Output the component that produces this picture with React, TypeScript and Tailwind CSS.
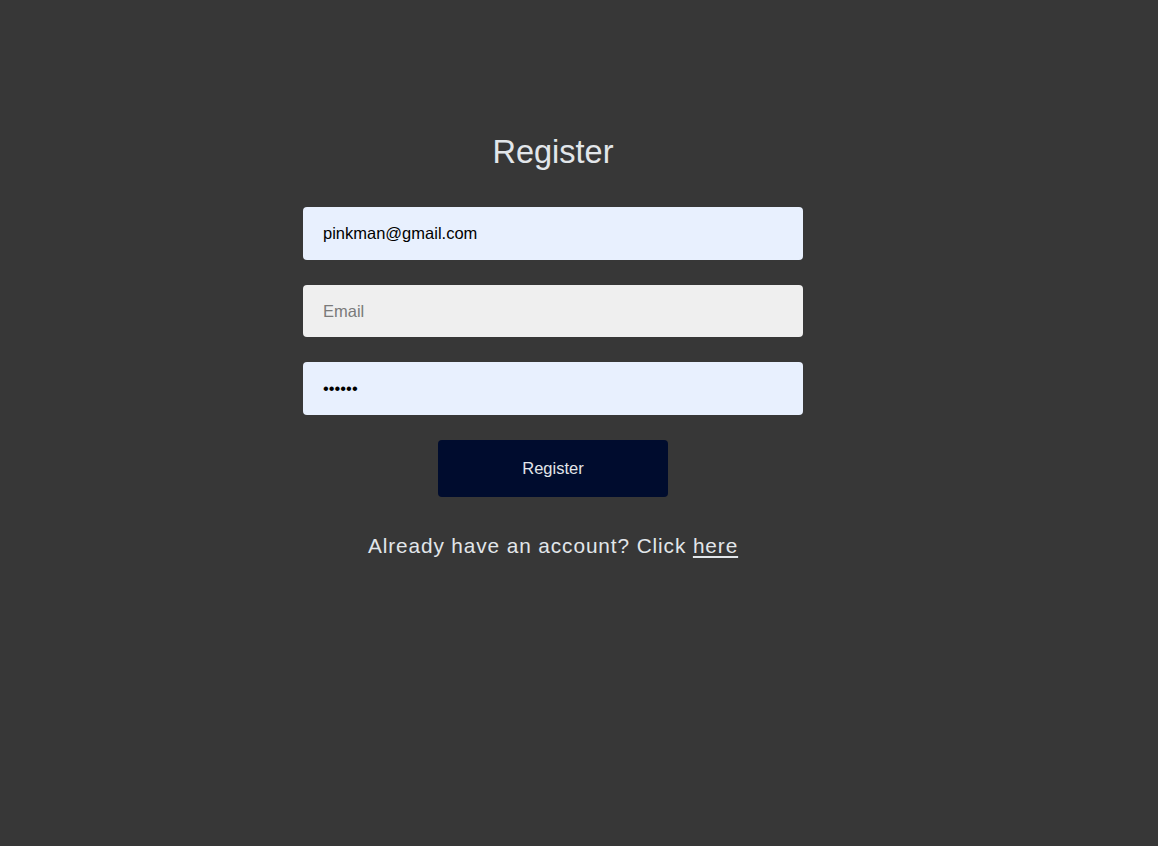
export default function App() {
  return (
    <div className="min-h-screen w-full bg-[#373737] font-['Liberation_Sans',Arial,sans-serif]">
      <div className="flex flex-col items-center pt-[133px] pr-[52px]">
        <h1 className="text-[32.5px] leading-[38px] text-[#e2e6ea] font-normal">Register</h1>

        <form className="mt-[36px] flex w-[500px] flex-col gap-[25px]" onSubmit={(e) => e.preventDefault()}>
          <input
            type="text"
            defaultValue="pinkman@gmail.com"
            className="h-[53px] w-full rounded-[4px] bg-[#e8f0fe] px-[20px] text-[16.5px] text-black outline-none"
          />
          <input
            type="email"
            placeholder="Email"
            className="h-[52px] w-full rounded-[4px] bg-[#efefef] px-[20px] text-[16.5px] text-black outline-none placeholder:text-[#7a7a7a]"
          />
          <input
            type="password"
            defaultValue="secret"
            className="h-[53px] w-full rounded-[4px] bg-[#e8f0fe] px-[20px] text-[16.5px] text-black outline-none"
          />
          <div className="flex justify-center">
            <button
              type="submit"
              className="h-[57px] w-[230px] rounded-[4px] bg-[#000c2e] text-[16.5px] text-[#e2e6ea]"
            >
              Register
            </button>
          </div>
        </form>

        <p className="mt-[33px] text-[20.8px] tracking-[0.9px] text-[#e2e6ea]">
          Already have an account? Click{' '}
          <a href="#" className="underline underline-offset-[3px]">here</a>
        </p>
      </div>
    </div>
  )
}
